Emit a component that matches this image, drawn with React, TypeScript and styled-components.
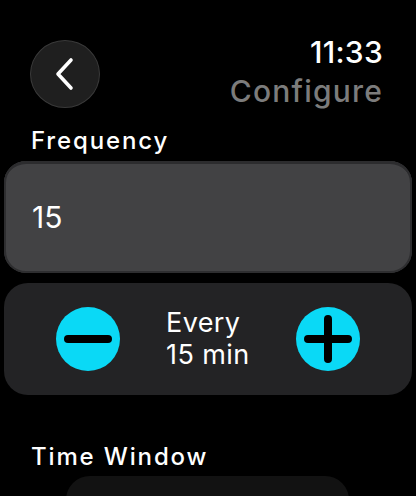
import styled, { createGlobalStyle } from "styled-components";

const Global = createGlobalStyle`
  html, body {
    margin: 0;
    background: #000;
    font-family: Inter, "Noto Sans", sans-serif;
    color: #fff;
  }
`;

const Screen = styled.div`
  width: 416px;
  height: 496px;
  overflow: hidden;
  background: #000;
`;

const Header = styled.div`
  display: flex;
  justify-content: space-between;
  align-items: flex-start;
  padding: 33px 33px 0 30px;
`;

const BackButton = styled.button`
  margin-top: 7px;
  width: 70px;
  height: 68px;
  border-radius: 50%;
  background: #1f1f1f;
  border: 1.5px solid #3a3a3a;
  display: flex;
  align-items: center;
  justify-content: center;
  padding: 0;
`;

const TitleBlock = styled.div`
  display: flex;
  flex-direction: column;
  align-items: flex-end;
`;

const HeadLine = styled.div<{ $muted?: boolean }>`
  font-size: 30px;
  line-height: 39px;
  font-weight: 500;
  letter-spacing: ${(p) => (p.$muted ? "1.2px" : "0.3px")};
  color: ${(p) => (p.$muted ? "#7c7c7c" : "#fff")};
`;

const SectionLabel = styled.div<{ $gap: number }>`
  margin: ${(p) => p.$gap}px 0 0 31px;
  font-size: 24px;
  line-height: 30px;
  font-weight: 500;
  letter-spacing: 1.85px;
`;

const Field = styled.div`
  margin: 5px 4px 0;
  height: 112px;
  box-sizing: border-box;
  border-radius: 22px;
  background: #424244;
  box-shadow: inset 0 3px 0 #2c2c2e, inset 0 0 0 2px #2e2e30;
  display: flex;
  align-items: center;
  padding-left: 28px;
  font-size: 30px;
  font-weight: 400;
`;

const Stepper = styled.div`
  margin: 10px 4px 0;
  height: 112px;
  border-radius: 24px;
  background: #232325;
  display: flex;
  align-items: center;
  justify-content: center;
  gap: 46px;
`;

const RoundButton = styled.div`
  width: 64px;
  height: 64px;
  border-radius: 50%;
  background: #0ad9f6;
  display: flex;
  align-items: center;
  justify-content: center;
`;

const StepText = styled.div`
  width: 84px;
  font-size: 27px;
  line-height: 32px;
  letter-spacing: 0.4px;
  white-space: nowrap;
`;

const WindowCard = styled.div`
  margin: 4px 0 0 66px;
  width: 283px;
  height: 80px;
  border-radius: 24px;
  background: #121212;
`;

export default function App() {
  return (
    <Screen>
      <Global />
      <Header>
        <BackButton aria-label="Back">
          <svg width="22" height="34" viewBox="0 0 22 34">
            <path
              d="M17 3 L4 17 L17 31"
              fill="none"
              stroke="#fff"
              strokeWidth="3.6"
              strokeLinecap="round"
              strokeLinejoin="round"
            />
          </svg>
        </BackButton>
        <TitleBlock>
          <HeadLine>11:33</HeadLine>
          <HeadLine $muted>Configure</HeadLine>
        </TitleBlock>
      </Header>

      <SectionLabel $gap={15}>Frequency</SectionLabel>
      <Field>15</Field>

      <Stepper>
        <RoundButton>
          <svg width="48" height="48" viewBox="0 0 48 48">
            <path d="M4 24 H44" stroke="#000" strokeWidth="8" strokeLinecap="round" />
          </svg>
        </RoundButton>
        <StepText>
          Every
          <br />
          15 min
        </StepText>
        <RoundButton>
          <svg width="48" height="48" viewBox="0 0 48 48">
            <path d="M4 24 H44 M24 4 V44" stroke="#000" strokeWidth="8" strokeLinecap="round" />
          </svg>
        </RoundButton>
      </Stepper>

      <SectionLabel $gap={47}>Time Window</SectionLabel>
      <WindowCard />
    </Screen>
  );
}
